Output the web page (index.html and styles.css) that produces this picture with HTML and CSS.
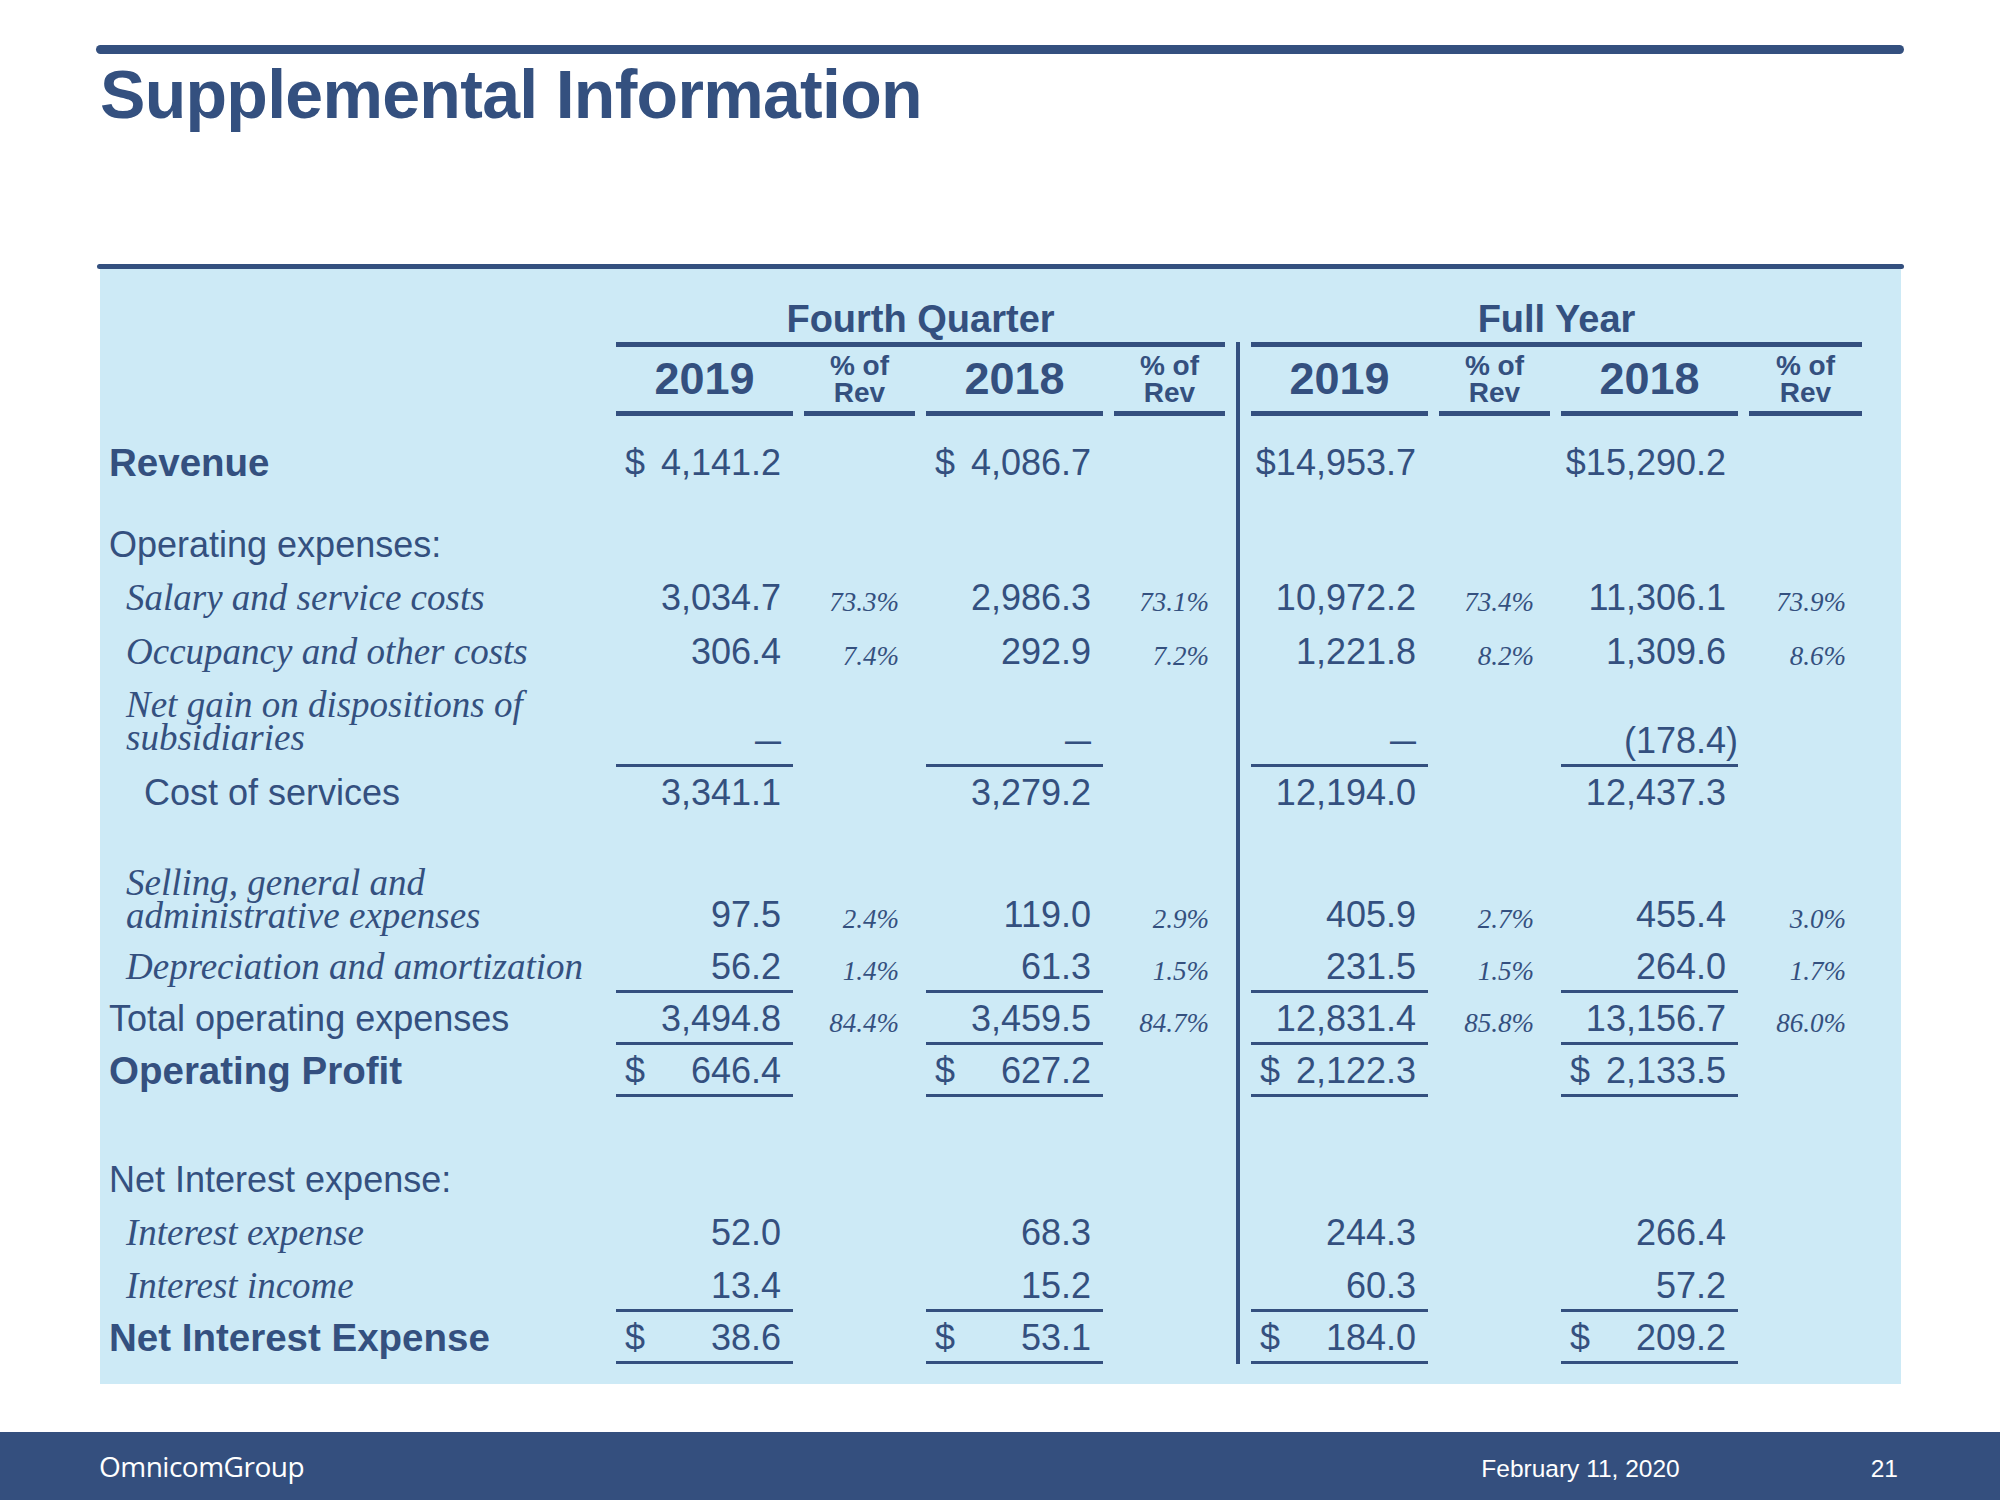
FILE: index.html
```html
<!DOCTYPE html>
<html lang="en">
<head>
<meta charset="utf-8">
<title>Supplemental Information</title>
<link rel="stylesheet" href="styles.css">
</head>
<body>
<div class="slide">
  <div class="top-rule"></div>
  <h1 class="title">Supplemental Information</h1>

  <div class="panel-rule"></div>
  <div class="panel">
    <div class="row r-grp">
      <div></div>
      <div class="grp grp-fq">Fourth Quarter</div>
      <div class="sep sep-top"></div>
      <div class="grp grp-fy">Full Year</div>
    </div>

    <div class="row r-years">
      <div></div>
      <div class="yh">2019</div>
      <div class="ph">% of<br>Rev</div>
      <div class="yh">2018</div>
      <div class="ph">% of<br>Rev</div>
      <div class="sep"></div>
      <div class="yh">2019</div>
      <div class="ph">% of<br>Rev</div>
      <div class="yh">2018</div>
      <div class="ph">% of<br>Rev</div>
    </div>

    <div class="row r-rev">
      <div class="lbl bold">Revenue</div>
      <div class="val"><span class="cur">$</span><span>4,141.2</span></div>
      <div class="pct"></div>
      <div class="val"><span class="cur">$</span><span>4,086.7</span></div>
      <div class="pct"></div>
      <div class="sep"></div>
      <div class="val"><span class="cur">$</span><span>14,953.7</span></div>
      <div class="pct"></div>
      <div class="val"><span class="cur">$</span><span>15,290.2</span></div>
      <div class="pct"></div>
    </div>

    <div class="row r-opex">
      <div class="lbl">Operating expenses:</div>
      <div></div><div></div><div></div><div></div>
      <div class="sep"></div>
    </div>

    <div class="row r-53">
      <div class="lbl it">Salary and service costs</div>
      <div class="val"><span>3,034.7</span></div>
      <div class="pct">73.3%</div>
      <div class="val"><span>2,986.3</span></div>
      <div class="pct">73.1%</div>
      <div class="sep"></div>
      <div class="val"><span>10,972.2</span></div>
      <div class="pct">73.4%</div>
      <div class="val"><span>11,306.1</span></div>
      <div class="pct">73.9%</div>
    </div>

    <div class="row r-54">
      <div class="lbl it">Occupancy and other costs</div>
      <div class="val"><span>306.4</span></div>
      <div class="pct">7.4%</div>
      <div class="val"><span>292.9</span></div>
      <div class="pct">7.2%</div>
      <div class="sep"></div>
      <div class="val"><span>1,221.8</span></div>
      <div class="pct">8.2%</div>
      <div class="val"><span>1,309.6</span></div>
      <div class="pct">8.6%</div>
    </div>

    <div class="row r-gain">
      <div class="lbl it two gain">Net gain on dispositions of<br>subsidiaries</div>
      <div class="val ul"><span class="dash">—</span></div>
      <div class="pct"></div>
      <div class="val ul"><span class="dash">—</span></div>
      <div class="pct"></div>
      <div class="sep"></div>
      <div class="val ul"><span class="dash">—</span></div>
      <div class="pct"></div>
      <div class="val ul"><span class="neg">(178.4)</span></div>
      <div class="pct"></div>
    </div>

    <div class="row r-52">
      <div class="lbl sub">Cost of services</div>
      <div class="val"><span>3,341.1</span></div>
      <div class="pct"></div>
      <div class="val"><span>3,279.2</span></div>
      <div class="pct"></div>
      <div class="sep"></div>
      <div class="val"><span>12,194.0</span></div>
      <div class="pct"></div>
      <div class="val"><span>12,437.3</span></div>
      <div class="pct"></div>
    </div>

    <div class="row r-sga">
      <div class="lbl it two sga">Selling, general and<br>administrative expenses</div>
      <div class="val"><span>97.5</span></div>
      <div class="pct">2.4%</div>
      <div class="val"><span>119.0</span></div>
      <div class="pct">2.9%</div>
      <div class="sep"></div>
      <div class="val"><span>405.9</span></div>
      <div class="pct">2.7%</div>
      <div class="val"><span>455.4</span></div>
      <div class="pct">3.0%</div>
    </div>

    <div class="row r-52">
      <div class="lbl it">Depreciation and amortization</div>
      <div class="val ul"><span>56.2</span></div>
      <div class="pct">1.4%</div>
      <div class="val ul"><span>61.3</span></div>
      <div class="pct">1.5%</div>
      <div class="sep"></div>
      <div class="val ul"><span>231.5</span></div>
      <div class="pct">1.5%</div>
      <div class="val ul"><span>264.0</span></div>
      <div class="pct">1.7%</div>
    </div>

    <div class="row r-52">
      <div class="lbl">Total operating expenses</div>
      <div class="val ul"><span>3,494.8</span></div>
      <div class="pct">84.4%</div>
      <div class="val ul"><span>3,459.5</span></div>
      <div class="pct">84.7%</div>
      <div class="sep"></div>
      <div class="val ul"><span>12,831.4</span></div>
      <div class="pct">85.8%</div>
      <div class="val ul"><span>13,156.7</span></div>
      <div class="pct">86.0%</div>
    </div>

    <div class="row r-52">
      <div class="lbl bold">Operating Profit</div>
      <div class="val ul"><span class="cur">$</span><span>646.4</span></div>
      <div class="pct"></div>
      <div class="val ul"><span class="cur">$</span><span>627.2</span></div>
      <div class="pct"></div>
      <div class="sep"></div>
      <div class="val ul"><span class="cur">$</span><span>2,122.3</span></div>
      <div class="pct"></div>
      <div class="val ul"><span class="cur">$</span><span>2,133.5</span></div>
      <div class="pct"></div>
    </div>

    <div class="row r-nie">
      <div class="lbl">Net Interest expense:</div>
      <div></div><div></div><div></div><div></div>
      <div class="sep"></div>
    </div>

    <div class="row r-53">
      <div class="lbl it">Interest expense</div>
      <div class="val"><span>52.0</span></div>
      <div class="pct"></div>
      <div class="val"><span>68.3</span></div>
      <div class="pct"></div>
      <div class="sep"></div>
      <div class="val"><span>244.3</span></div>
      <div class="pct"></div>
      <div class="val"><span>266.4</span></div>
      <div class="pct"></div>
    </div>

    <div class="row r-53">
      <div class="lbl it">Interest income</div>
      <div class="val ul"><span>13.4</span></div>
      <div class="pct"></div>
      <div class="val ul"><span>15.2</span></div>
      <div class="pct"></div>
      <div class="sep"></div>
      <div class="val ul"><span>60.3</span></div>
      <div class="pct"></div>
      <div class="val ul"><span>57.2</span></div>
      <div class="pct"></div>
    </div>

    <div class="row r-52">
      <div class="lbl bold">Net Interest Expense</div>
      <div class="val ul"><span class="cur">$</span><span>38.6</span></div>
      <div class="pct"></div>
      <div class="val ul"><span class="cur">$</span><span>53.1</span></div>
      <div class="pct"></div>
      <div class="sep"></div>
      <div class="val ul"><span class="cur">$</span><span>184.0</span></div>
      <div class="pct"></div>
      <div class="val ul"><span class="cur">$</span><span>209.2</span></div>
      <div class="pct"></div>
    </div>
  </div>

  <footer class="footer">
    <div class="logo">OmnicomGroup</div>
    <div class="foot-right">
      <span class="date">February 11, 2020</span>
      <span class="page">21</span>
    </div>
  </footer>
</div>
</body>
</html>
```

FILE: styles.css
```css
html, body {
  margin: 0;
  padding: 0;
  background: #ffffff;
}

body {
  width: 2000px;
  height: 1500px;
  overflow: hidden;
  font-family: "Liberation Sans", Arial, sans-serif;
  color: #34507f;
}

.slide {
  width: 2000px;
  height: 1500px;
  display: flex;
  flex-direction: column;
}

.top-rule {
  margin: 45px 96px 0 96px;
  height: 9px;
  border-radius: 5px;
  background: #34507f;
}

.title {
  margin: 0 0 0 100px;
  height: 80px;
  font-size: 68px;
  line-height: 80px;
  font-weight: bold;
  letter-spacing: -0.7px;
  color: #34507f;
}

.panel-rule {
  margin: 130px 96px 0 97px;
  height: 5px;
  border-radius: 3px;
  background: #34507f;
}

.panel {
  margin: 0 99px 0 100px;
  height: 1115px;
  box-sizing: border-box;
  padding-bottom: 20px;
  background: #cdeaf6;
}

.row {
  display: grid;
  grid-template-columns: 505px 177px 111px 177px 111px 4px 177px 111px 177px 113px;
  column-gap: 11px;
  align-items: end;
}

.r-grp   { height: 78px; }
.r-years { height: 69px; }
.r-rev   { height: 73px; }
.r-opex  { height: 82px; }
.r-53    { height: 53px; }
.r-54    { height: 54px; }
.r-gain  { height: 89px; }
.r-52    { height: 52px; }
.r-sga   { height: 122px; }
.r-nie   { height: 109px; }

.sep {
  align-self: stretch;
  background: #34507f;
}

.sep-top {
  align-self: end;
  height: 5px;
}

.grp {
  box-sizing: border-box;
  border-bottom: 5px solid #34507f;
  padding-bottom: 1px;
  font-size: 38px;
  line-height: 44px;
  font-weight: bold;
  text-align: center;
}

.grp-fq { grid-column: 2 / 6; }
.grp-fy { grid-column: 7 / 11; }

.yh, .ph {
  align-self: stretch;
  box-sizing: border-box;
  border-bottom: 5px solid #34507f;
  display: flex;
  flex-direction: column;
  align-items: center;
  justify-content: center;
  text-align: center;
  font-weight: bold;
}

.yh {
  font-size: 45px;
  line-height: 52px;
}

.ph {
  font-size: 28px;
  line-height: 27px;
}

.lbl {
  height: 52px;
  line-height: 52px;
  font-size: 36px;
  padding-left: 9px;
  white-space: nowrap;
}

.lbl.bold {
  font-size: 38.5px;
  font-weight: bold;
}

.lbl.it {
  font-family: "Liberation Serif", "Times New Roman", serif;
  font-style: italic;
  font-size: 37px;
  padding-left: 26px;
}

.lbl.sub {
  padding-left: 44px;
}

.lbl.two {
  height: auto;
  line-height: 33px;
}

.lbl.gain { padding-bottom: 13px; }
.lbl.sga  { padding-bottom: 9px; }

.val {
  height: 52px;
  box-sizing: border-box;
  display: flex;
  justify-content: flex-end;
  align-items: baseline;
  padding: 0 12px 0 9px;
  font-size: 36px;
  line-height: 52px;
  white-space: nowrap;
}

.val.ul {
  box-shadow: inset 0 -3px 0 #34507f;
}

.cur {
  margin-right: auto;
}

.dash {
  font-size: 26px;
  font-weight: bold;
}

.neg {
  margin-right: -12px;
}

.pct {
  height: 52px;
  box-sizing: border-box;
  padding: 8px 16px 0 0;
  text-align: right;
  font-family: "Liberation Serif", "Times New Roman", serif;
  font-style: italic;
  font-size: 27px;
  line-height: 44px;
  white-space: nowrap;
}

.footer {
  margin-top: 48px;
  height: 68px;
  background: #344f7e;
  display: flex;
  align-items: center;
  justify-content: space-between;
  padding: 0 102px 0 99px;
  color: #ffffff;
}

.logo {
  font-family: "Open Sans", "Liberation Sans", sans-serif;
  font-size: 28px;
  letter-spacing: -0.5px;
}

.foot-right {
  display: flex;
  align-items: center;
  gap: 191px;
  font-size: 24.5px;
  padding-top: 5px;
}
```
